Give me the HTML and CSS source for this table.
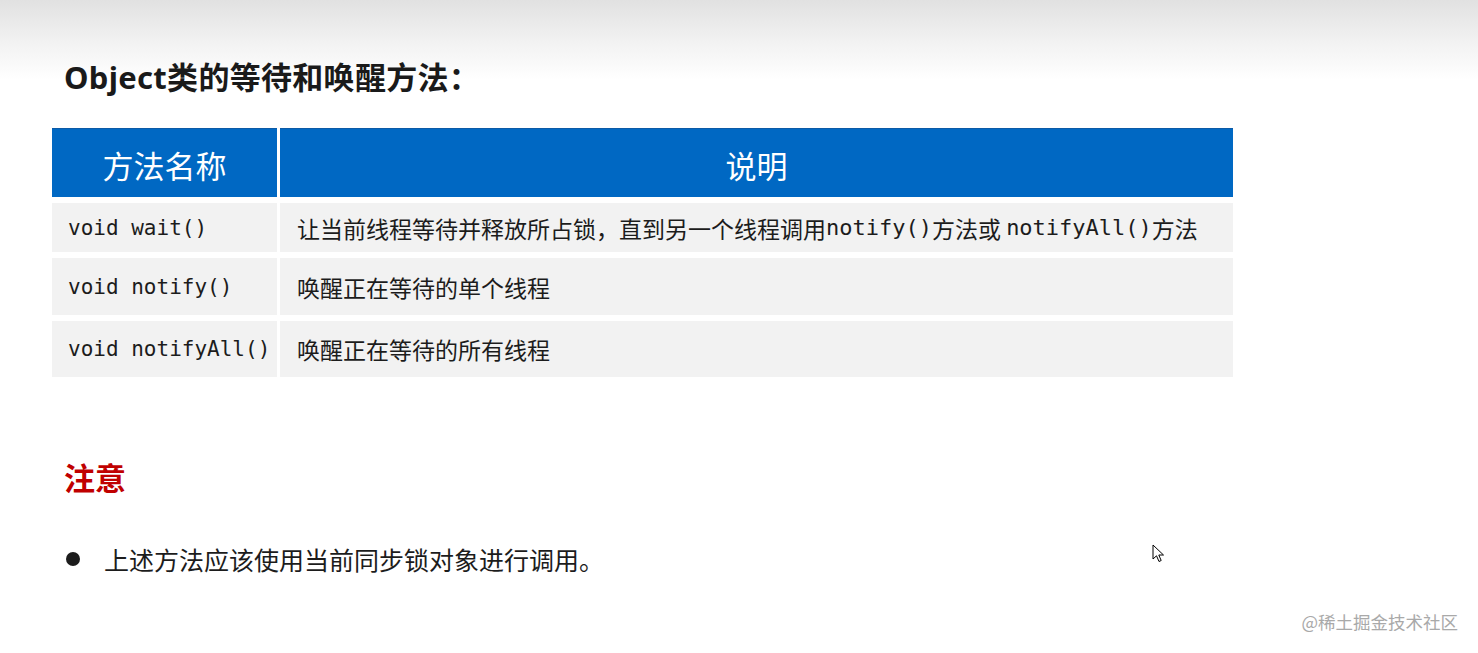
FILE: index.html
```html
<!DOCTYPE html>
<html lang="zh-CN">
<head>
    <meta charset="UTF-8">
    <meta name="viewport" content="width=device-width, initial-scale=1.0">
    <title>Object类的等待和唤醒方法</title>
    <link rel="stylesheet" href="styles.css">
</head>
<body>

<div class="slide">
    <h1 class="title">Object类的等待和唤醒方法：</h1>

    <div class="methods">
        <div class="head">方法名称</div>
        <div class="head">说明</div>

        <div class="cell code">void wait()</div>
        <div class="cell desc">让当前线程等待并释放所占锁，直到另一个线程调用<code>notify()</code>方法或&nbsp;<code>notifyAll()</code>方法</div>

        <div class="cell code">void notify()</div>
        <div class="cell desc">唤醒正在等待的单个线程</div>

        <div class="cell code">void notifyAll()</div>
        <div class="cell desc">唤醒正在等待的所有线程</div>
    </div>

    <h2 class="note">注意</h2>
    <ul class="points">
        <li>上述方法应该使用当前同步锁对象进行调用。</li>
    </ul>
</div>

<!-- mouse pointer left in the recording -->
<svg class="pointer" width="14" height="20" viewBox="0 0 14 20">
    <path d="M1 1 L1 15 L4.5 11.8 L7 17.5 L9.2 16.5 L6.8 11 L11.5 11 Z" fill="#fff" stroke="#000" stroke-width="1" stroke-linejoin="round"/>
</svg>

<div class="watermark">@稀土掘金技术社区</div>

</body>
</html>
```

FILE: styles.css
```css
body {
    margin: 0;
    padding: 0;
    background: linear-gradient(to bottom, #e1e1e1 0px, #f3f3f3 45px, #ffffff 80px, #ffffff 100%);
    font-family: "Noto Sans", "Noto Sans CJK SC", sans-serif;
    color: #1c1c1c;
    height: 653px;
    overflow: hidden;
    position: relative;
}
.slide {
    padding: 56px 245px 0 52px;
}
.title {
    margin: 0 0 30px 12px;
    font-size: 31px;
    line-height: 42px;
    font-weight: 700;
    color: #1a1a1a;
    letter-spacing: 0.3px;
}
.methods {
    display: grid;
    grid-template-columns: 225px 1fr;
    grid-template-rows: 69px 49px 57px 56px;
    column-gap: 3px;
    row-gap: 6px;
    width: 1181px;
}
.head {
    background-color: #0068c3;
    border-top: 1px solid #0c5aa6;
    color: #fff;
    font-size: 31px;
    font-weight: 400;
    display: flex;
    align-items: center;
    justify-content: center;
    padding-top: 2px;
}
.cell {
    background-color: #f2f2f2;
    display: flex;
    align-items: center;
    white-space: nowrap;
}
.code {
    font-family: "DejaVu Sans Mono", "Liberation Mono", monospace;
    font-size: 21px;
    padding-left: 16px;
    color: #1c1c1c;
}
.desc {
    font-family: "Noto Sans CJK SC", sans-serif;
    font-size: 23px;
    padding-left: 17px;
}
.desc code {
    font-family: "DejaVu Sans Mono", "Liberation Mono", monospace;
    font-size: 22px;
}
.note {
    margin: 80px 0 0 12px;
    font-size: 31px;
    line-height: 40px;
    font-weight: 700;
    color: #c00000;
    font-family: "Noto Sans CJK SC", sans-serif;
}
.points {
    list-style: none;
    margin: 44px 0 0 14px;
    padding: 0;
}
.points li {
    display: flex;
    align-items: center;
    font-family: "Noto Sans CJK SC", sans-serif;
    font-size: 25px;
    line-height: 36px;
    color: #1c1c1c;
}
.points li::before {
    content: "";
    width: 14px;
    height: 14px;
    border-radius: 50%;
    background-color: #1c1c1c;
    margin-right: 24px;
    flex-shrink: 0;
}
.pointer {
    position: absolute;
    left: 1152px;
    top: 544px;
}
.watermark {
    position: absolute;
    right: 20px;
    bottom: 19px;
    font-family: "Noto Sans CJK SC", sans-serif;
    font-size: 17.5px;
    line-height: 24px;
    color: #a9a9a9;
}
```
